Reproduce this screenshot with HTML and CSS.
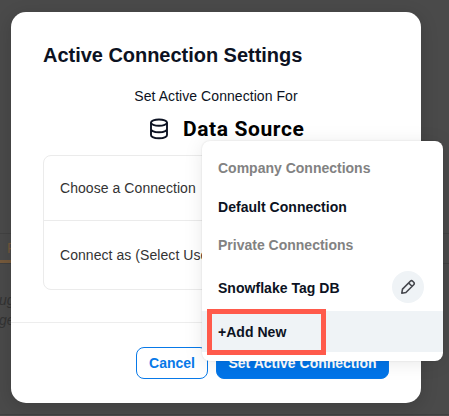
FILE: index.html
```html
<!DOCTYPE html>
<html lang="en">
<head>
<meta charset="utf-8">
<title>Active Connection Settings</title>
<link rel="stylesheet" href="styles.css">
</head>
<body>
<div class="backdrop">
  <div class="backdrop-bar"></div>
  <span class="backdrop-tab">R</span>
  <div class="backdrop-note">ug<br>ge</div>
</div>
<main class="modal">
  <h1>Active Connection Settings</h1>
  <p class="subtitle">Set Active Connection For</p>
  <div class="source">
    <svg width="20" height="22" viewBox="0 0 20 22" fill="none" stroke="#0c1222" stroke-width="1.9"><ellipse cx="10" cy="4.6" rx="8" ry="3.1"/><path d="M2 4.6v12.5c0 1.8 3.5 3.2 8 3.2s8-1.4 8-3.2V4.6M2 11c0 1.8 3.5 3.2 8 3.2s8-1.4 8-3.2"/></svg>
    <h2>Data Source</h2>
  </div>
  <div class="fields">
    <div class="field">Choose a Connection</div>
    <div class="field">Connect as (Select User)</div>
  </div>
  <footer>
    <button class="btn">Cancel</button>
    <button class="btn primary">Set Active Connection</button>
  </footer>
</main>
<div class="menu">
  <div class="group company">Company Connections</div>
  <div class="item default">Default Connection</div>
  <div class="group private">Private Connections</div>
  <div class="item snowflake"><span>Snowflake Tag DB</span>
    <span class="edit"><svg width="16" height="16" viewBox="0 0 16 16" fill="none" stroke="#45474d" stroke-width="1.6" stroke-linejoin="round"><path d="M1.8 14.2l.7-4.1 7.8-7.8q1.2-1.2 2.4 0l1 1q1.2 1.2 0 2.4l-7.8 7.8zM8.7 4l3.3 3.3"/></svg></span>
  </div>
  <div class="item add">+Add New</div>
</div>
<div class="marker"></div>
</body>
</html>
```

FILE: styles.css
```css
* { box-sizing: border-box; }
body {
  margin: 0;
  width: 449px;
  height: 416px;
  overflow: hidden;
  padding: 12px 28px 13px 11px;
  background: #4a4a4a;
  font-family: "Liberation Sans", Arial, sans-serif;
  font-size: 14px;
  color: #0c1222;
}
.backdrop {
  position: absolute;
  top: 233px;
  left: 0;
  width: 449px;
  height: 182px;
  border-top: 1px solid #424242;
  border-bottom: 1px solid #404040;
}
.backdrop-bar {
  height: 30px;
  border-bottom: 1px solid #404040;
}
.backdrop-tab {
  position: absolute;
  top: 0;
  left: 0;
  width: 20px;
  height: 29px;
  padding: 6px 0 0 7px;
  border-bottom: 3px solid #765a3c;
  color: #765a3c;
  line-height: 16px;
}
.backdrop-note {
  position: absolute;
  top: 56px;
  left: -1px;
  color: #333;
  font-style: italic;
  line-height: 20px;
}
.modal {
  position: relative;
  width: 410px;
  height: 391px;
  border-radius: 15px;
  background: #fff;
  box-shadow: 0 4px 18px rgba(0, 0, 0, .16);
}
h1, h2, p { margin: 0; }
h1 {
  padding: 31px 32px 0;
  font-size: 20px;
  line-height: 24px;
  letter-spacing: -.03px;
}
.subtitle {
  margin-top: 19px;
  text-align: center;
  line-height: 20px;
  letter-spacing: .06px;
}
.source {
  display: flex;
  align-items: center;
  height: 28px;
  margin: 9px 0 0 138px;
  gap: 14px;
}
h2 {
  color: #000;
  font-family: Roboto, "Liberation Sans", sans-serif;
  font-size: 21px;
  line-height: 28px;
  letter-spacing: .6px;
}
.fields {
  height: 135px;
  margin: 12px 32px 0;
  border: 1px solid #ebebeb;
  border-radius: 8px;
  color: #333;
}
.field {
  display: flex;
  align-items: center;
  height: 64px;
  padding-left: 16px;
  letter-spacing: .06px;
}
.field + .field {
  height: 69px;
  border-top: 1px solid #ebebeb;
}
footer {
  display: flex;
  justify-content: flex-end;
  gap: 8px;
  height: 81px;
  margin-top: 32px;
  padding: 24px 32px 0;
  border-top: 1px solid #ededed;
}
.btn {
  width: 72px;
  height: 32px;
  padding: 0;
  border: 1px solid #0879e8;
  border-radius: 8px;
  background: #fff;
  color: #0879e8;
  font: bold 14px/20px "Liberation Sans", Arial, sans-serif;
}
.primary {
  width: 173px;
  background: #0074e8;
  color: #fff;
}
.menu {
  position: absolute;
  top: 141px;
  left: 202px;
  width: 241px;
  height: 220px;
  border-radius: 8px;
  background: #fff;
  box-shadow: 0 0 2px rgba(0, 0, 0, .12), 0 2px 20px rgba(0, 0, 0, .09);
  font-weight: bold;
  letter-spacing: .03px;
}
.group, .item {
  display: flex;
  align-items: center;
  padding: 0 19px 0 16px;
}
.group { color: #828282; letter-spacing: 0; }
.company { height: 44px; padding-top: 10px; }
.default { height: 44px; padding-bottom: 1px; }
.private { height: 32px; }
.snowflake {
  height: 50px;
  justify-content: space-between;
  padding-top: 4px;
}
.edit {
  display: flex;
  align-items: center;
  justify-content: center;
  width: 32px;
  height: 32px;
  margin-top: -2px;
  border-radius: 50%;
  background: #eff3f6;
}
.add { height: 41px; background: #eff3f6; }
.marker {
  position: absolute;
  top: 309px;
  left: 207px;
  width: 119px;
  height: 46px;
  border: 5px solid #ff5a4b;
}
```
